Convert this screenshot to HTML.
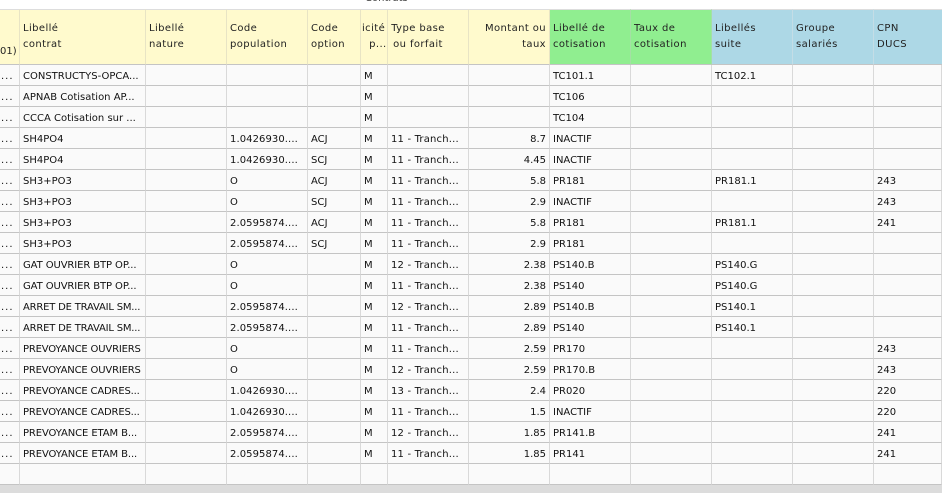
<!DOCTYPE html>
<html><head><meta charset="utf-8">
<style>
html,body{margin:0;padding:0;background:#fff;}
body{width:942px;height:493px;overflow:hidden;position:relative;font-family:"DejaVu Sans","Liberation Sans",sans-serif;font-size:10px;color:#333;}
#title{position:absolute;left:365px;top:-7px;font-size:10px;color:#444;}
#band{position:absolute;left:0;top:485px;width:942px;height:8px;background:#dcdcdc;}
table{position:absolute;left:0;top:9px;border-collapse:separate;border-spacing:0;table-layout:fixed;width:942px;}
th,td{overflow:hidden;white-space:nowrap;box-sizing:border-box;padding:0 3px;border-right:1px solid #d9d9d9;}
th{height:56px;border-top:1px solid #ddd;border-bottom:1px solid #c4c4c4;font-weight:normal;text-align:left;white-space:normal;line-height:16px;vertical-align:top;padding-top:11px;background:#fffacd;border-right-color:#e8e4c4;color:#222;letter-spacing:.4px;}
th.g{background:#90ee90;border-right-color:#a5dfa5;}
th.b{background:#add8e6;border-right-color:#c4dde6;}
td{height:21px;background:#fafafa;border-bottom:1px solid #c4c4c4;line-height:17px;padding-top:3px;vertical-align:top;color:#111;}
td.r{text-align:right;}
td.e{padding:3px 0 0 1px;letter-spacing:1px;}
th.c{text-align:center;padding-right:20px;padding-left:0;}
th.r{text-align:right;}
.nb{white-space:nowrap;}
.t{letter-spacing:.18px;}
.n{letter-spacing:.08px;}
.p{letter-spacing:-.17px;}
.a{letter-spacing:-.2px;}
.s{letter-spacing:-.1px;}
</style></head><body>
<div id="title">Contrats</div>
<table>
<colgroup><col style="width:20px"><col style="width:126px"><col style="width:81px"><col style="width:81px"><col style="width:53px"><col style="width:27px"><col style="width:81px"><col style="width:81px"><col style="width:81px"><col style="width:81px"><col style="width:81px"><col style="width:81px"><col style="width:68px"></colgroup>
<tr>
<th style="padding:34px 0 0 0;text-align:left;letter-spacing:0"><span class="nb">01)</span></th>
<th>Libellé<br>contrat</th><th>Libellé<br>nature</th><th>Code<br>population</th><th>Code<br>option</th>
<th style="padding:11px 0 0 1px"><span class="nb">icité</span><br><span class="nb">&nbsp;&nbsp;p...</span></th>
<th class="c">Type base<br>ou forfait</th><th class="r">Montant ou<br>taux</th>
<th class="g">Libellé de<br>cotisation</th><th class="g">Taux de<br>cotisation</th>
<th class="b">Libellés<br>suite</th><th class="b">Groupe<br>salariés</th><th class="b" style="border-right:0">CPN<br>DUCS</th>
</tr>
<tr><td class="e">...</td><td>CONSTRUCTYS-OPCA...</td><td></td><td></td><td></td><td>M</td><td></td><td class="r"></td><td>TC101.1</td><td></td><td>TC102.1</td><td></td><td></td></tr>
<tr><td class="e">...</td><td>APNAB Cotisation AP...</td><td></td><td></td><td></td><td>M</td><td></td><td class="r"></td><td>TC106</td><td></td><td></td><td></td><td></td></tr>
<tr><td class="e">...</td><td>CCCA Cotisation sur ...</td><td></td><td></td><td></td><td>M</td><td></td><td class="r"></td><td>TC104</td><td></td><td></td><td></td><td></td></tr>
<tr><td class="e">...</td><td>SH4PO4</td><td></td><td class="n">1.0426930....</td><td>ACJ</td><td>M</td><td class="t">11 - Tranch...</td><td class="r">8.7</td><td>INACTIF</td><td></td><td></td><td></td><td></td></tr>
<tr><td class="e">...</td><td>SH4PO4</td><td></td><td class="n">1.0426930....</td><td>SCJ</td><td>M</td><td class="t">11 - Tranch...</td><td class="r">4.45</td><td>INACTIF</td><td></td><td></td><td></td><td></td></tr>
<tr><td class="e">...</td><td>SH3+PO3</td><td></td><td>O</td><td>ACJ</td><td>M</td><td class="t">11 - Tranch...</td><td class="r">5.8</td><td>PR181</td><td></td><td>PR181.1</td><td></td><td>243</td></tr>
<tr><td class="e">...</td><td>SH3+PO3</td><td></td><td>O</td><td>SCJ</td><td>M</td><td class="t">11 - Tranch...</td><td class="r">2.9</td><td>INACTIF</td><td></td><td></td><td></td><td>243</td></tr>
<tr><td class="e">...</td><td>SH3+PO3</td><td></td><td class="n">2.0595874....</td><td>ACJ</td><td>M</td><td class="t">11 - Tranch...</td><td class="r">5.8</td><td>PR181</td><td></td><td>PR181.1</td><td></td><td>241</td></tr>
<tr><td class="e">...</td><td>SH3+PO3</td><td></td><td class="n">2.0595874....</td><td>SCJ</td><td>M</td><td class="t">11 - Tranch...</td><td class="r">2.9</td><td>PR181</td><td></td><td></td><td></td><td></td></tr>
<tr><td class="e">...</td><td class="s">GAT OUVRIER BTP OP...</td><td></td><td>O</td><td></td><td>M</td><td class="t">12 - Tranch...</td><td class="r">2.38</td><td>PS140.B</td><td></td><td>PS140.G</td><td></td><td></td></tr>
<tr><td class="e">...</td><td class="s">GAT OUVRIER BTP OP...</td><td></td><td>O</td><td></td><td>M</td><td class="t">11 - Tranch...</td><td class="r">2.38</td><td>PS140</td><td></td><td>PS140.G</td><td></td><td></td></tr>
<tr><td class="e">...</td><td class="a">ARRET DE TRAVAIL SM...</td><td></td><td class="n">2.0595874....</td><td></td><td>M</td><td class="t">12 - Tranch...</td><td class="r">2.89</td><td>PS140.B</td><td></td><td>PS140.1</td><td></td><td></td></tr>
<tr><td class="e">...</td><td class="a">ARRET DE TRAVAIL SM...</td><td></td><td class="n">2.0595874....</td><td></td><td>M</td><td class="t">11 - Tranch...</td><td class="r">2.89</td><td>PS140</td><td></td><td>PS140.1</td><td></td><td></td></tr>
<tr><td class="e">...</td><td class="p">PREVOYANCE OUVRIERS</td><td></td><td>O</td><td></td><td>M</td><td class="t">11 - Tranch...</td><td class="r">2.59</td><td>PR170</td><td></td><td></td><td></td><td>243</td></tr>
<tr><td class="e">...</td><td class="p">PREVOYANCE OUVRIERS</td><td></td><td>O</td><td></td><td>M</td><td class="t">12 - Tranch...</td><td class="r">2.59</td><td>PR170.B</td><td></td><td></td><td></td><td>243</td></tr>
<tr><td class="e">...</td><td class="p">PREVOYANCE CADRES...</td><td></td><td class="n">1.0426930....</td><td></td><td>M</td><td class="t">13 - Tranch...</td><td class="r">2.4</td><td>PR020</td><td></td><td></td><td></td><td>220</td></tr>
<tr><td class="e">...</td><td class="p">PREVOYANCE CADRES...</td><td></td><td class="n">1.0426930....</td><td></td><td>M</td><td class="t">11 - Tranch...</td><td class="r">1.5</td><td>INACTIF</td><td></td><td></td><td></td><td>220</td></tr>
<tr><td class="e">...</td><td class="s">PREVOYANCE ETAM B...</td><td></td><td class="n">2.0595874....</td><td></td><td>M</td><td class="t">12 - Tranch...</td><td class="r">1.85</td><td>PR141.B</td><td></td><td></td><td></td><td>241</td></tr>
<tr><td class="e">...</td><td class="s">PREVOYANCE ETAM B...</td><td></td><td class="n">2.0595874....</td><td></td><td>M</td><td class="t">11 - Tranch...</td><td class="r">1.85</td><td>PR141</td><td></td><td></td><td></td><td>241</td></tr>
<tr><td></td><td></td><td></td><td></td><td></td><td></td><td></td><td></td><td></td><td></td><td></td><td></td><td></td></tr>
</table>
<div id="band"></div>
</body></html>
